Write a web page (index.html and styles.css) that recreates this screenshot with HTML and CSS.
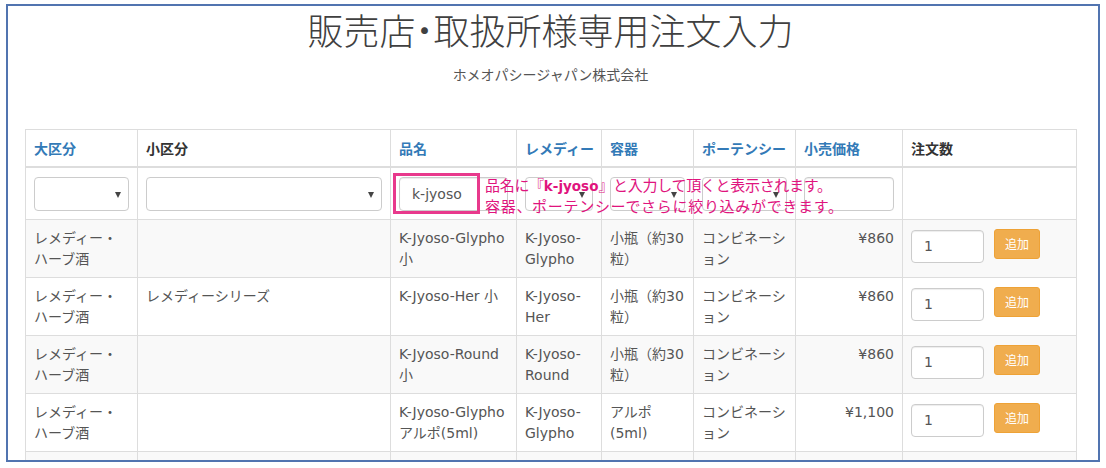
FILE: index.html
```html
<!DOCTYPE html>
<html lang="ja">
<head>
<meta charset="utf-8">
<title>販売店・取扱所様専用注文入力</title>
<link rel="stylesheet" href="styles.css">
</head>
<body>
<div class="frame">
  <div class="page">
    <header class="page-header">
      <h1 class="title">販売店<span class="dot">・</span>取扱所様専用注文入力</h1>
      <p class="company">ホメオパシージャパン株式会社</p>
    </header>
    <table class="order-table">
      <colgroup>
        <col class="c-large">
        <col class="c-small">
        <col class="c-name">
        <col class="c-remedy">
        <col class="c-container">
        <col class="c-potency">
        <col class="c-price">
        <col class="c-qty">
      </colgroup>
      <thead>
        <tr class="head-row">
          <th><a href="#" class="sort">大区分</a></th>
          <th>小区分</th>
          <th><a href="#" class="sort">品名</a></th>
          <th><a href="#" class="sort">レメディー</a></th>
          <th><a href="#" class="sort">容器</a></th>
          <th><a href="#" class="sort">ポーテンシー</a></th>
          <th><a href="#" class="sort">小売価格</a></th>
          <th>注文数</th>
        </tr>
        <tr class="filter-row">
          <td><div class="select"></div></td>
          <td><div class="select"></div></td>
          <td class="name-filter">
            <div class="field">k-jyoso</div>
            <div class="highlight"></div>
            <div class="note">
              <p class="note-line1">品名に『<b>k-jyoso</b>』と入力して頂くと表示されます。</p>
              <p class="note-line2">容器、ポーテンシーでさらに絞り込みができます。</p>
            </div>
          </td>
          <td><div class="select"></div></td>
          <td><div class="select"></div></td>
          <td><div class="select"></div></td>
          <td><div class="field"></div></td>
          <td></td>
        </tr>
      </thead>
      <tbody>
        <tr>
          <td>レメディー・ハーブ酒</td>
          <td></td>
          <td>K-Jyoso-Glypho 小</td>
          <td>K-Jyoso-Glypho</td>
          <td>小瓶（約30粒）</td>
          <td>コンビネーション</td>
          <td class="price">¥860</td>
          <td><div class="qty"><div class="qty-input">1</div><button class="btn-add">追加</button></div></td>
        </tr>
        <tr>
          <td>レメディー・ハーブ酒</td>
          <td>レメディーシリーズ</td>
          <td>K-Jyoso-Her 小</td>
          <td>K-Jyoso-Her</td>
          <td>小瓶（約30粒）</td>
          <td>コンビネーション</td>
          <td class="price">¥860</td>
          <td><div class="qty"><div class="qty-input">1</div><button class="btn-add">追加</button></div></td>
        </tr>
        <tr>
          <td>レメディー・ハーブ酒</td>
          <td></td>
          <td>K-Jyoso-Round 小</td>
          <td>K-Jyoso-Round</td>
          <td>小瓶（約30粒）</td>
          <td>コンビネーション</td>
          <td class="price">¥860</td>
          <td><div class="qty"><div class="qty-input">1</div><button class="btn-add">追加</button></div></td>
        </tr>
        <tr>
          <td>レメディー・ハーブ酒</td>
          <td></td>
          <td>K-Jyoso-Glypho アルポ(5ml)</td>
          <td>K-Jyoso-Glypho</td>
          <td>アルポ(5ml)</td>
          <td>コンビネーション</td>
          <td class="price">¥1,100</td>
          <td><div class="qty"><div class="qty-input">1</div><button class="btn-add">追加</button></div></td>
        </tr>
        <tr class="row-partial">
          <td></td>
          <td></td>
          <td></td>
          <td></td>
          <td></td>
          <td></td>
          <td></td>
          <td></td>
        </tr>
      </tbody>
    </table>
  </div>
</div>
</body>
</html>
```
FILE: styles.css
```css
* {
  box-sizing: border-box;
}

html,
body {
  margin: 0;
  padding: 0;
  background: #ffffff;
}

body {
  font-family: "Noto Sans CJK JP", sans-serif;
  color: #333333;
}

.frame {
  margin: 4px 0 0 6px;
  width: 1094px;
  height: 458px;
  border: 2px solid #5174b0;
  overflow: hidden;
  background: #ffffff;
}

.page {
  padding: 0 22px 0 17px;
}

.page-header {
  height: 123px;
  padding-top: 3px;
  text-align: center;
}

.title {
  margin: 0;
  font-family: "Noto Sans CJK JP Light", "Noto Sans CJK JP", sans-serif;
  font-size: 36px;
  font-weight: 300;
  line-height: 40px;
  color: #404040;
}

.title .dot {
  font-feature-settings: "palt" 1;
}

.company {
  margin: 15px 0 0;
  font-size: 14px;
  line-height: 20px;
  color: #555555;
}

.order-table {
  width: 1051px;
  table-layout: fixed;
  border-collapse: collapse;
  border: 1px solid #dddddd;
  font-family: "DejaVu Sans", "Noto Sans CJK JP", sans-serif;
  font-size: 14px;
}

.c-large { width: 112px; }
.c-small { width: 253px; }
.c-name { width: 126px; }
.c-remedy { width: 85px; }
.c-container { width: 92px; }
.c-potency { width: 102px; }
.c-price { width: 107px; }
.c-qty { width: 174px; }

.order-table th,
.order-table td {
  border: 1px solid #dddddd;
  padding: 8px;
  vertical-align: top;
  text-align: left;
}

.order-table th {
  font-family: "Noto Sans CJK JP", sans-serif;
  font-weight: 700;
  line-height: 20px;
  white-space: nowrap;
  color: #333333;
  border-bottom-width: 2px;
}

.sort {
  color: #337ab7;
  text-decoration: none;
}

.filter-row td {
  padding: 9px 8px 8px;
  background: #ffffff;
}

.select {
  position: relative;
  height: 34px;
  border: 1px solid #cccccc;
  border-radius: 4px;
  background: #ffffff;
}

.select::after {
  content: "";
  position: absolute;
  right: 7px;
  top: 14px;
  border-left: 3.5px solid transparent;
  border-right: 3.5px solid transparent;
  border-top: 6px solid #444444;
}

.field {
  height: 34px;
  padding: 6px 12px;
  border: 1px solid #cccccc;
  border-radius: 4px;
  background: #ffffff;
  box-shadow: inset 0 1px 1px rgba(0, 0, 0, 0.075);
  font-size: 14px;
  line-height: 20px;
  color: #555555;
}

.name-filter {
  position: relative;
}

.highlight {
  position: absolute;
  z-index: 2;
  left: 2px;
  top: 5px;
  width: 87px;
  height: 41px;
  border: 3px solid #e8398c;
}

.note {
  position: absolute;
  z-index: 3;
  left: 94px;
  top: 7px;
  width: 420px;
  font-family: "Noto Sans CJK JP", sans-serif;
  font-size: 15px;
  line-height: 19px;
  color: #e0147e;
  white-space: nowrap;
}

.note p {
  margin: 0;
}

.note-line1 {
  letter-spacing: -0.3px;
}

.note-line2 {
  letter-spacing: 0.7px;
}

.note b {
  font-family: "DejaVu Sans", "Noto Sans CJK JP", sans-serif;
  font-size: 13.5px;
  letter-spacing: 0;
}

.order-table tbody td {
  line-height: 20.5px;
  color: #555555;
  line-break: loose;
}

.order-table tbody tr:nth-child(odd) {
  background: #f9f9f9;
}

.order-table tbody tr:nth-child(even) {
  background: #ffffff;
}

.order-table .row-partial td {
  height: 58px;
}

.order-table td.price {
  text-align: right;
}

.qty {
  display: flex;
  align-items: flex-start;
  gap: 10px;
}

.qty-input {
  width: 73px;
  height: 33px;
  margin-top: 2px;
  padding: 5px 12px;
  border: 1px solid #cccccc;
  border-radius: 4px;
  background: #ffffff;
  box-shadow: inset 0 1px 1px rgba(0, 0, 0, 0.075);
  font-size: 14px;
  line-height: 21px;
  color: #555555;
}

.btn-add {
  width: 46px;
  height: 30px;
  margin-top: 1px;
  padding: 0;
  border: 1px solid #eea236;
  border-radius: 3px;
  background: #f0ad4e;
  color: #ffffff;
  font-family: "Noto Sans CJK JP", sans-serif;
  font-size: 12px;
  line-height: 28px;
  text-align: center;
}
```
